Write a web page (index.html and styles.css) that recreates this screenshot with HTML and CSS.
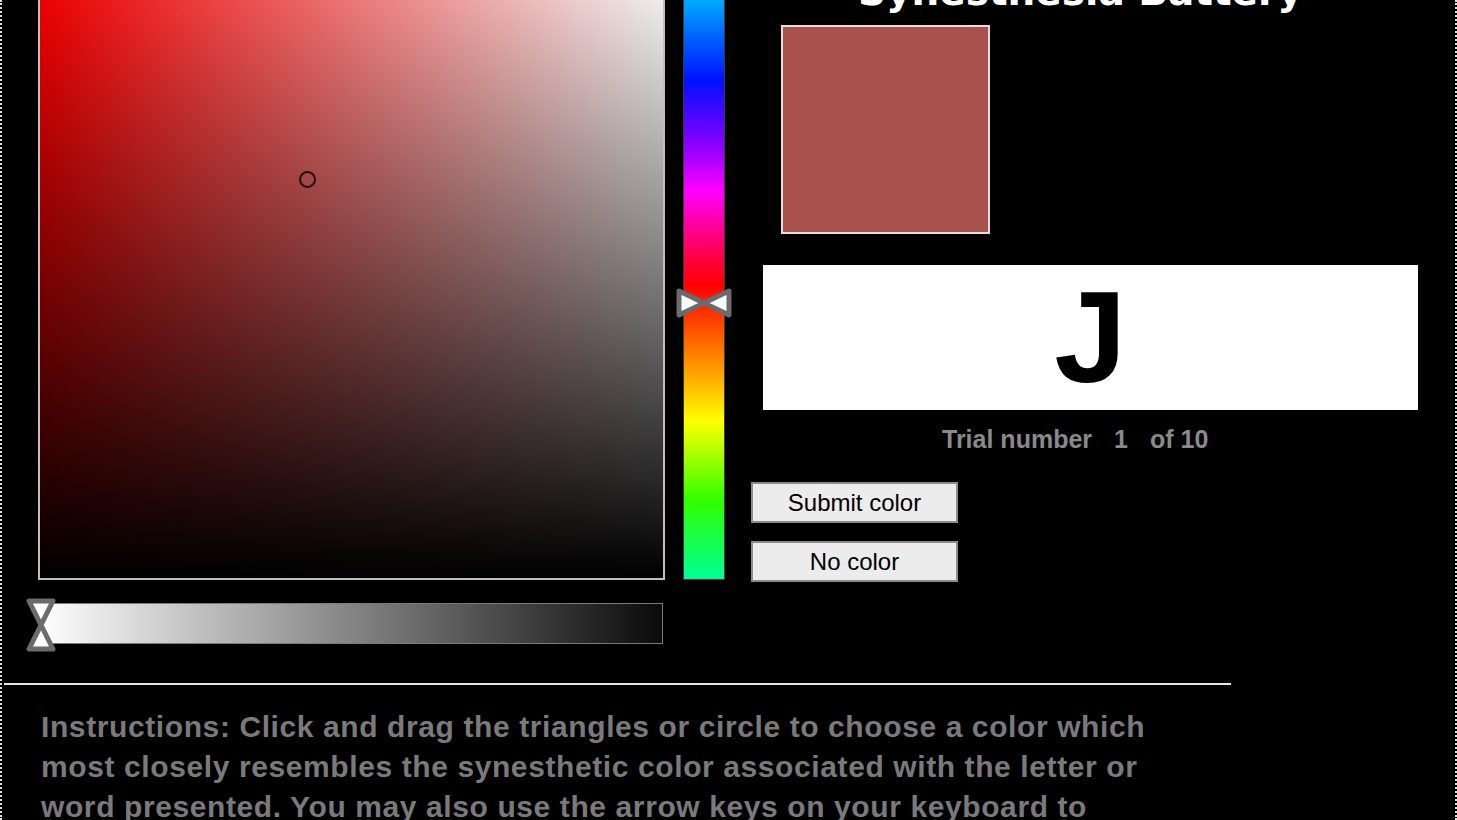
FILE: index.html
```html
<!DOCTYPE html>
<html>
<head>
<meta charset="utf-8">
<link rel="stylesheet" href="styles.css">
</head>
<body>
<div class="page">
  <div class="scroller">
    <div class="main">
      <div class="left-col">
        <div class="sv-square">
          <div class="sv-circle"></div>
        </div>
        <div class="gray-slider">
          <svg class="hourglass" viewBox="0 0 30 54" width="30" height="54">
            <path d="M3 3 L27 3 L15 27 Z M3 51 L27 51 L15 27 Z" fill="#fff" stroke="#6b6b6b" stroke-width="5" stroke-linejoin="round"/>
          </svg>
        </div>
      </div>
      <div class="hue-col">
        <div class="hue-bar">
          <svg class="bowtie" viewBox="0 0 56 30" width="56" height="30">
            <path d="M3 3 L28 15 L3 27 Z M53 3 L28 15 L53 27 Z" fill="#fff" stroke="#6b6b6b" stroke-width="5" stroke-linejoin="round"/>
          </svg>
        </div>
      </div>
      <div class="right-col">
        <h1 class="title">Synesthesia Battery</h1>
        <div class="swatch"></div>
        <div class="letter-box"><span class="letter">J</span></div>
        <div class="trial">
          <span>Trial number</span>
          <span class="trial-num">1</span>
          <span>of 10</span>
        </div>
        <button class="btn btn-submit">Submit color</button>
        <button class="btn btn-none">No color</button>
      </div>
    </div>
    <div class="separator"></div>
    <p class="instructions">Instructions: Click and drag the triangles or circle to choose a color which most closely resembles the synesthetic color associated with the letter or word presented. You may also use the arrow keys on your keyboard to</p>
  </div>
</div>
</body>
</html>
```
FILE: styles.css
```css
html, body {
  margin: 0;
  padding: 0;
  background: #000;
}
.page {
  width: 1457px;
  height: 820px;
  box-sizing: border-box;
  border-left: 2px dotted #e0e0e0;
  border-right: 2px dotted #e0e0e0;
  overflow: hidden;
  background: #000;
  font-family: "Liberation Sans", Arial, sans-serif;
}
.scroller {
  margin-top: -47px;
}
.main {
  display: flex;
  align-items: flex-start;
}
.left-col {
  margin-left: 36px;
  width: 627px;
  display: flex;
  flex-direction: column;
}
.sv-square {
  position: relative;
  width: 627px;
  height: 627px;
  box-sizing: border-box;
  border: 2px solid #c9bcbc;
  background:
    linear-gradient(to top, #000 0%, rgba(0,0,0,0) 100%),
    linear-gradient(to right, rgba(255,255,255,0) 0%, #fff 100%),
    #ff0000;
}
.sv-circle {
  position: absolute;
  left: 259px;
  top: 216px;
  width: 13px;
  height: 13px;
  border: 2px solid #241010;
  border-radius: 50%;
}
.gray-slider {
  position: relative;
  margin-top: 23px;
  width: 625px;
  height: 41px;
  box-sizing: border-box;
  border: 1px solid #7a7a7a;
  background: linear-gradient(to right, #ffffff 0%, #0a0a0a 100%);
}
.hourglass {
  position: absolute;
  left: -13px;
  top: -6px;
}
.hue-col {
  margin-left: 18px;
}
.hue-bar {
  position: relative;
  width: 42px;
  height: 627px;
  box-sizing: border-box;
  border: 1px solid #3a3a3a;
  background: linear-gradient(to bottom,
    #00ffee 0px,
    #00a8ff 47px,
    #0010ff 127px,
    #8000ff 187px,
    #ff00ff 237px,
    #ff0040 305px,
    #ff0000 332px,
    #ff6600 387px,
    #ffff00 467px,
    #30ff00 547px,
    #00ff99 627px);
}
.bowtie {
  position: absolute;
  left: -8px;
  top: 334px;
}
.right-col {
  margin-left: 0;
  display: flex;
  flex-direction: column;
  align-items: flex-start;
}
.title {
  margin: 16px 0 0 0;
  padding-left: 133px;
  font-family: "DejaVu Sans", sans-serif;
  font-weight: bold;
  font-size: 39px;
  line-height: 46px;
  color: #fff;
  white-space: nowrap;
}
.swatch {
  margin-top: 10px;
  margin-left: 56px;
  width: 209px;
  height: 209px;
  box-sizing: border-box;
  border: 2px solid #e6dcdc;
  background: #a9514d;
}
.letter-box {
  margin-top: 31px;
  margin-left: 38px;
  width: 655px;
  height: 145px;
  background: #fff;
  display: flex;
  justify-content: center;
}
.letter {
  font-family: "Liberation Sans", Arial, sans-serif;
  font-weight: bold;
  font-size: 130px;
  line-height: 145px;
  color: #000;
}
.trial {
  margin-top: 15px;
  margin-left: 217px;
  display: flex;
  gap: 22px;
  font-weight: bold;
  font-size: 25px;
  line-height: 28px;
  color: #8a8a8a;
}
.trial-num {
  color: #868a90;
}
.btn {
  margin-left: 26px;
  width: 207px;
  height: 41px;
  box-sizing: border-box;
  border: 2px solid #8c8c8c;
  background: #ececec;
  font-family: "Liberation Sans", Arial, sans-serif;
  font-size: 24px;
  color: #000;
  padding: 0;
}
.btn-submit {
  margin-top: 29px;
}
.btn-none {
  margin-top: 18px;
}
.separator {
  margin-top: 39px;
  margin-left: 2px;
  width: 1227px;
  height: 2px;
  background: #e4e4e4;
}
.instructions {
  margin: 22px 0 0 39px;
  width: 1110px;
  font-weight: bold;
  font-size: 30px;
  letter-spacing: 0.6px;
  line-height: 40px;
  color: #7a7a7a;
}
```
